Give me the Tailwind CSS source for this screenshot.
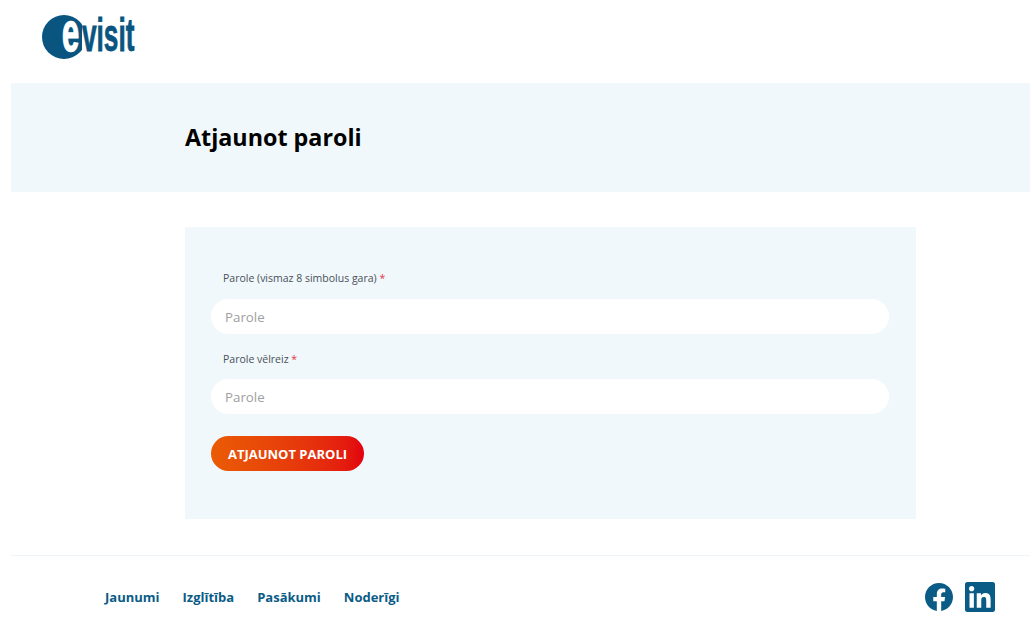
<!DOCTYPE html>
<html lang="lv">
<head>
    <meta charset="UTF-8">
    <meta name="viewport" content="width=device-width, initial-scale=1.0">
    <title>Atjaunot paroli</title>
    <script src="https://cdn.jsdelivr.net/npm/@tailwindcss/browser@4"></script>
</head>
<body class="bg-white h-[627px] overflow-hidden pl-[11px] font-['Open_Sans',sans-serif]">
    <!-- logo -->
    <header class="h-[83px] pl-[31px] pt-[15px]">
        <div class="flex items-start">
            <div class="relative w-[40px] h-[44px] shrink-0">
                <svg class="w-[40px] h-[44px]" viewBox="0 0 40 44"><circle cx="22" cy="22" r="22" fill="#0a5480"/></svg>
                <span class="absolute left-[20px] top-[-18px] font-['Liberation_Sans',sans-serif] font-bold text-[56px] leading-[70px] text-white origin-left scale-x-[0.55] [-webkit-text-stroke:1.5px_white]">e</span>
            </div>
            <span class="font-['Liberation_Sans',sans-serif] font-bold text-[46px] leading-[40px] text-[#0a5480] origin-left scale-x-[0.57] whitespace-nowrap [-webkit-text-stroke:0.8px_#0a5480]">visit</span>
        </div>
    </header>

    <section class="bg-[#f0f8fc] h-[109px] flex items-center pl-[174px]">
        <h1 class="text-[23.3px] font-bold text-black leading-[32px] mt-[-1px]">Atjaunot paroli</h1>
    </section>

    <main class="pl-[174px] pt-[35px]">
        <form class="w-[731px] h-[292px] bg-[#f0f8fc] pl-[26px] pr-[27px] pt-[43px]">
            <label class="block pl-[12px] text-[10.5px] leading-[16px] text-[#495057]">Parole (vismaz 8 simbolus gara) <span class="text-[#e3343f]">*</span></label>
            <input type="password" placeholder="Parole" class="mt-[13px] block w-full h-[35px] rounded-full bg-white px-[14px] text-[13.3px] placeholder:text-[#9e9e9e] outline-none">
            <label class="block mt-[17px] pl-[12px] text-[10.5px] leading-[16px] text-[#495057]">Parole vēlreiz <span class="text-[#e3343f]">*</span></label>
            <input type="password" placeholder="Parole" class="mt-[12px] block w-full h-[35px] rounded-full bg-white px-[14px] text-[13.3px] placeholder:text-[#9e9e9e] outline-none">
            <button type="button" class="mt-[22px] block w-[153px] h-[35px] rounded-full bg-gradient-to-r from-[#ea5b04] to-[#e3000f] text-white text-[13px] leading-[37px] font-bold">ATJAUNOT PAROLI</button>
        </form>
    </main>

    <footer class="mt-[36px] border-t border-[#eff4f8] h-[72px] flex items-center justify-between pl-[94px] pr-[35px]">
        <nav class="flex gap-[23px] text-[13px] font-bold text-[#0a5c86] mt-[12px]">
            <a href="#">Jaunumi</a>
            <a href="#">Izglītība</a>
            <a href="#">Pasākumi</a>
            <a href="#">Noderīgi</a>
        </nav>
        <div class="flex items-center gap-[12px] mt-[10px]">
            <svg class="w-[28px] h-[28px]" viewBox="0 0 24 24" fill="#0a5c86"><path d="M24 12.07C24 5.4 18.63 0 12 0S0 5.4 0 12.07c0 6.03 4.39 11.02 10.13 11.93v-8.44H7.08v-3.49h3.05V9.41c0-3.02 1.79-4.69 4.53-4.69 1.31 0 2.69.24 2.69.24v2.97h-1.51c-1.49 0-1.96.93-1.96 1.89v2.25h3.33l-.53 3.49h-2.8V24C19.61 23.09 24 18.1 24 12.07z"/></svg>
            <svg class="w-[30px] h-[30px]" viewBox="0 0 24 24" fill="#0a5c86"><path d="M22.2 0H1.8C.8 0 0 .8 0 1.8v20.4c0 1 .8 1.8 1.8 1.8h20.4c1 0 1.8-.8 1.8-1.8V1.8c0-1-.8-1.8-1.8-1.8zM7.1 20.5H3.6V9h3.5v11.5zM5.3 7.4c-1.1 0-2.1-.9-2.1-2.1s.9-2.1 2.1-2.1 2.1.9 2.1 2.1-1 2.1-2.1 2.1zm15.2 13.1H17v-5.6c0-1.3 0-3-1.9-3s-2.1 1.4-2.1 2.9v5.7H9.4V9h3.4v1.6h.1c.5-.9 1.6-1.9 3.4-1.9 3.6 0 4.2 2.4 4.2 5.5v6.3z"/></svg>
        </div>
    </footer>
</body>
</html>
